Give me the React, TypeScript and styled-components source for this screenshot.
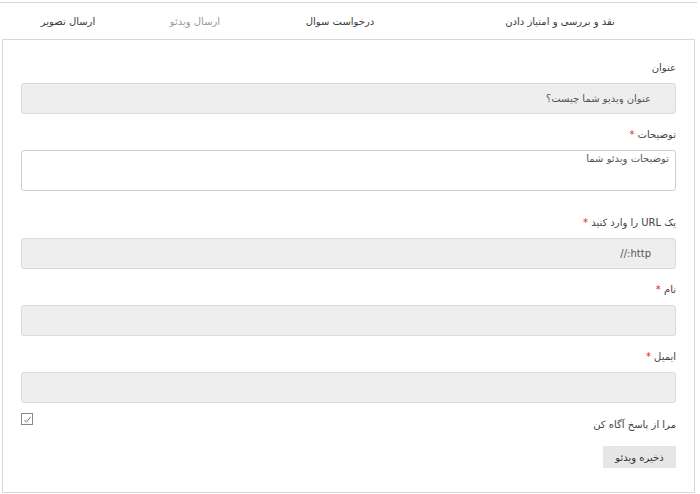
import React from "react";
import styled, { createGlobalStyle } from "styled-components";

const GlobalStyle = createGlobalStyle`
  html, body {
    margin: 0;
    padding: 0;
    background: #fff;
  }
  body {
    font-family: "DejaVu Sans", "Noto Sans", sans-serif;
    font-size: 10px;
    color: #444;
  }
  * {
    box-sizing: border-box;
  }
`;

type Tab = { title: string; width: number; muted?: boolean };

const tabs: Tab[] = [
  { title: "نقد و بررسی و امتیاز دادن", width: 274 },
  { title: "درخواست سوال", width: 166 },
  { title: "ارسال ویدئو", width: 124, muted: true },
  { title: "ارسال تصویر", width: 130 },
];

const CheckIcon = () => (
  <svg width="9" height="9" viewBox="0 0 10 10" fill="none">
    <path d="M1.5 5.5 L4 8 L8.5 2" stroke="#777" strokeWidth="1.1" />
  </svg>
);

const App = () => {
  return (
    <>
      <GlobalStyle />
      <Page dir="rtl">
        <TabBar>
          {tabs.map((tab) => (
            <TabItem key={tab.title} $width={tab.width} $muted={tab.muted}>
              {tab.title}
            </TabItem>
          ))}
        </TabBar>
        <Panel>
          <Field>
            <Label>عنوان</Label>
            <Input placeholder="عنوان ویدیو شما چیست؟" />
          </Field>
          <Field $spaced>
            <Label>
              توضیحات <Star>*</Star>
            </Label>
            <TextArea placeholder="توضیحات ویدئو شما" />
          </Field>
          <Field>
            <Label>
              یک URL را وارد کنید <Star>*</Star>
            </Label>
            <Input placeholder="http://" />
          </Field>
          <Field>
            <Label>
              نام <Star>*</Star>
            </Label>
            <Input />
          </Field>
          <Field>
            <Label>
              ایمیل <Star>*</Star>
            </Label>
            <Input />
          </Field>
          <NotifyRow>
            <NotifyText>مرا از پاسخ آگاه کن</NotifyText>
            <CheckBox>
              <CheckIcon />
            </CheckBox>
          </NotifyRow>
          <SaveButton type="button">ذخیره ویدئو</SaveButton>
        </Panel>
      </Page>
    </>
  );
};

const Page = styled.div`
  width: 697px;
  padding-top: 2px;
`;

const TabBar = styled.ul`
  display: flex;
  margin: 0;
  padding: 0;
  list-style: none;
  height: 37px;
  border-top: 1px solid #d6d6d6;
`;

const TabItem = styled.li<{ $width: number; $muted?: boolean }>`
  width: ${(p) => p.$width}px;
  display: flex;
  align-items: center;
  justify-content: center;
  color: ${(p) => (p.$muted ? "#9a9a9a" : "#3a3a3a")};
  font-size: 10px;
`;

const Panel = styled.div`
  margin-right: 2px;
  width: 693px;
  height: 454px;
  border: 1px solid #d8d8d8;
  padding: 20px 18px 23px;
`;

const Field = styled.div<{ $spaced?: boolean }>`
  display: flex;
  flex-direction: column;
  margin-bottom: ${(p) => (p.$spaced ? 24 : 13)}px;
`;

const Label = styled.label`
  line-height: 16px;
  height: 16px;
  margin-bottom: 7px;
  color: #444;
`;

const Star = styled.span`
  color: #d9262b;
`;

const Input = styled.input`
  flex: none;
  height: 31px;
  width: 100%;
  background: #eeeeee;
  border: 1px solid #dadada;
  border-radius: 3px;
  padding: 0 24px;
  font-family: inherit;
  font-size: 10px;
  color: #444;
  outline: none;
  &::placeholder {
    color: #555;
  }
`;

const TextArea = styled.textarea`
  flex: none;
  display: block;
  height: 41px;
  width: 100%;
  background: #fff;
  border: 1px solid #cfcfcf;
  border-radius: 3px;
  padding: 2px 6px;
  font-family: inherit;
  font-size: 10px;
  resize: none;
  outline: none;
  &::placeholder {
    color: #555;
  }
`;

const NotifyRow = styled.div`
  display: flex;
  justify-content: space-between;
  align-items: flex-start;
  margin-top: -3px;
  height: 20px;
  margin-bottom: 13px;
`;

const NotifyText = styled.span`
  padding-top: 4px;
  line-height: 16px;
  color: #444;
`;

const CheckBox = styled.span`
  width: 12px;
  height: 12px;
  border: 1px solid #888;
  display: flex;
  align-items: center;
  justify-content: center;
  background: #fff;
`;

const SaveButton = styled.button`
  display: block;
  height: 22px;
  width: 73px;
  padding: 0;
  border: none;
  background: #e6e6e6;
  color: #333;
  font-family: inherit;
  font-size: 10px;
`;

export default App;
